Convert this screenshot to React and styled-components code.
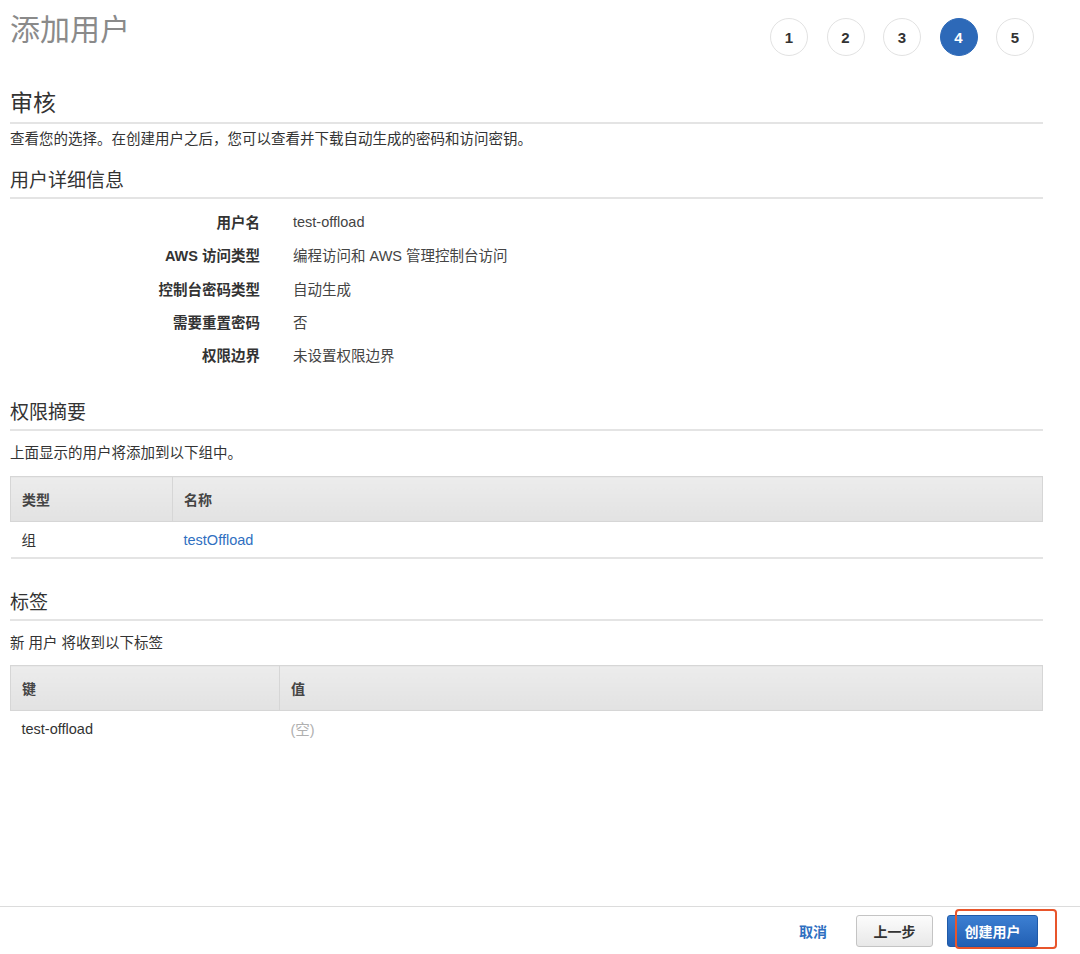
import React from "react"
import styled, { createGlobalStyle } from "styled-components"

const GlobalStyle = createGlobalStyle`
  html, body {
    margin: 0;
    padding: 0;
    background: #fff;
  }
  body {
    font-family: "Liberation Sans", "Noto Sans CJK SC", sans-serif;
    color: #333;
  }
`

const details = [
  ["用户名", "test-offload"],
  ["AWS 访问类型", "编程访问和 AWS 管理控制台访问"],
  ["控制台密码类型", "自动生成"],
  ["需要重置密码", "否"],
  ["权限边界", "未设置权限边界"],
]

const steps = [1, 2, 3, 4, 5]
const ACTIVE_STEP = 4

export default function App() {
  return (
    <Page>
      <GlobalStyle />
      <Main>
        <Header>
          <Title>添加用户</Title>
          <Steps>
            {steps.map(n => (
              <Step key={n} active={n === ACTIVE_STEP}>{n}</Step>
            ))}
          </Steps>
        </Header>

        <PageHeading>审核</PageHeading>
        <Desc>查看您的选择。在创建用户之后，您可以查看并下载自动生成的密码和访问密钥。</Desc>

        <SectionHeading top={20}>用户详细信息</SectionHeading>
        <DetailGrid>
          {details.map(([k, v]) => (
            <React.Fragment key={k}>
              <DetailLabel>{k}</DetailLabel>
              <DetailValue>{v}</DetailValue>
            </React.Fragment>
          ))}
        </DetailGrid>

        <SectionHeading top={30}>权限摘要</SectionHeading>
        <Desc spaced>上面显示的用户将添加到以下组中。</Desc>
        <Table>
          <colgroup>
            <col style={{ width: 162 }} />
            <col />
          </colgroup>
          <thead>
            <tr>
              <Th>类型</Th>
              <Th>名称</Th>
            </tr>
          </thead>
          <tbody>
            <tr>
              <Td bordered>组</Td>
              <Td bordered><Link>testOffload</Link></Td>
            </tr>
          </tbody>
        </Table>

        <SectionHeading top={32}>标签</SectionHeading>
        <Desc spaced>新 用户 将收到以下标签</Desc>
        <Table tight>
          <colgroup>
            <col style={{ width: 269 }} />
            <col />
          </colgroup>
          <thead>
            <tr>
              <Th>键</Th>
              <Th>值</Th>
            </tr>
          </thead>
          <tbody>
            <tr>
              <Td>test-offload</Td>
              <Td><Empty>(空)</Empty></Td>
            </tr>
          </tbody>
        </Table>
      </Main>

      <Footer>
        <CancelLink>取消</CancelLink>
        <SecondaryButton>上一步</SecondaryButton>
        <PrimaryWrap>
          <PrimaryButton>创建用户</PrimaryButton>
          <Highlight />
        </PrimaryWrap>
      </Footer>
    </Page>
  )
}

const Page = styled.div`
  min-height: 954px;
  display: flex;
  flex-direction: column;
`

const Main = styled.div`
  padding: 0 37px 0 10px;
  flex: 1;
`

const Header = styled.div`
  display: flex;
  justify-content: space-between;
  align-items: flex-start;
  height: 70px;
`

const Title = styled.h1`
  margin: 12px 0 0;
  font-size: 30px;
  line-height: 36px;
  font-weight: 400;
  color: #8a8a8a;
`

const Steps = styled.div`
  display: flex;
  gap: 18.5px;
  margin-top: 18px;
  padding-right: 9px;
`

const Step = styled.div`
  width: 38px;
  height: 38px;
  box-sizing: border-box;
  border-radius: 50%;
  border: 1px solid ${p => (p.active ? "#2d69b8" : "#e2e2e2")};
  background: ${p => (p.active ? "#2d69b8" : "#fff")};
  color: ${p => (p.active ? "#fff" : "#333")};
  display: flex;
  align-items: center;
  justify-content: center;
  font-size: 15px;
  font-weight: 700;
`

const PageHeading = styled.h2`
  margin: 19px 0 0;
  font-size: 23px;
  line-height: 28px;
  font-weight: 400;
  color: #333;
  padding-bottom: 5px;
  border-bottom: 2px solid #e4e4e4;
`

const SectionHeading = styled.h3`
  margin: ${p => p.top}px 0 0;
  font-size: 19px;
  line-height: 24px;
  font-weight: 400;
  color: #333;
  padding-bottom: 4px;
  border-bottom: 2px solid #e4e4e4;
`

const Desc = styled.p`
  margin: ${p => (p.spaced ? "12px" : "5px")} 0 0;
  font-size: 14.5px;
  line-height: 20px;
  color: #333;
`

const DetailGrid = styled.div`
  display: grid;
  grid-template-columns: 250px 1fr;
  column-gap: 33px;
  grid-auto-rows: 33.3px;
  align-items: center;
  margin-top: 6px;
`

const DetailLabel = styled.div`
  text-align: right;
  font-size: 14.5px;
  font-weight: 700;
  color: #333;
`

const DetailValue = styled.div`
  font-size: 14.5px;
  color: #444;
`

const Table = styled.table`
  width: 100%;
  margin-top: ${p => (p.tight ? "12px" : "13px")};
  border-collapse: collapse;
  table-layout: fixed;
  font-size: 14.5px;
`

const Th = styled.th`
  height: 44px;
  padding: 0 11px;
  text-align: left;
  font-weight: 700;
  font-size: 14px;
  color: #444;
  background: linear-gradient(#ececec, #e2e2e2);
  border: 1px solid #d6d6d6;
`

const Td = styled.td`
  height: 35px;
  padding: 0 11px;
  color: #333;
  border-bottom: ${p => (p.bordered ? "2px solid #e4e4e4" : "none")};
`

const Link = styled.span`
  color: #2f6fc1;
`

const Empty = styled.span`
  color: #b0b0b0;
`

const Footer = styled.div`
  border-top: 1px solid #dcdcdc;
  height: 48px;
  display: flex;
  align-items: flex-start;
  justify-content: flex-end;
  padding: 8px 42px 0 0;
  box-sizing: border-box;
`

const CancelLink = styled.span`
  font-size: 14px;
  font-weight: 700;
  color: #2f6fc1;
  line-height: 32px;
  margin-right: 29px;
  margin-top: 1px;
`

const Button = styled.div`
  height: 32px;
  box-sizing: border-box;
  border-radius: 3px;
  display: flex;
  align-items: center;
  justify-content: center;
  font-size: 14px;
  font-weight: 700;
`

const SecondaryButton = styled(Button)`
  width: 77px;
  margin-right: 14px;
  color: #333;
  border: 1px solid #c4c4c4;
  background: linear-gradient(#fcfcfc, #e8e8e8);
`

const PrimaryWrap = styled.div`
  position: relative;
`

const PrimaryButton = styled(Button)`
  width: 91px;
  color: #fff;
  border: 1px solid #1f5aa8;
  background: linear-gradient(#3c7fd2, #2260b4);
`

const Highlight = styled.div`
  position: absolute;
  left: 8px;
  top: -6px;
  width: 102px;
  height: 40px;
  box-sizing: border-box;
  border: 2px solid #e8552b;
  border-radius: 4px;
  pointer-events: none;
`
